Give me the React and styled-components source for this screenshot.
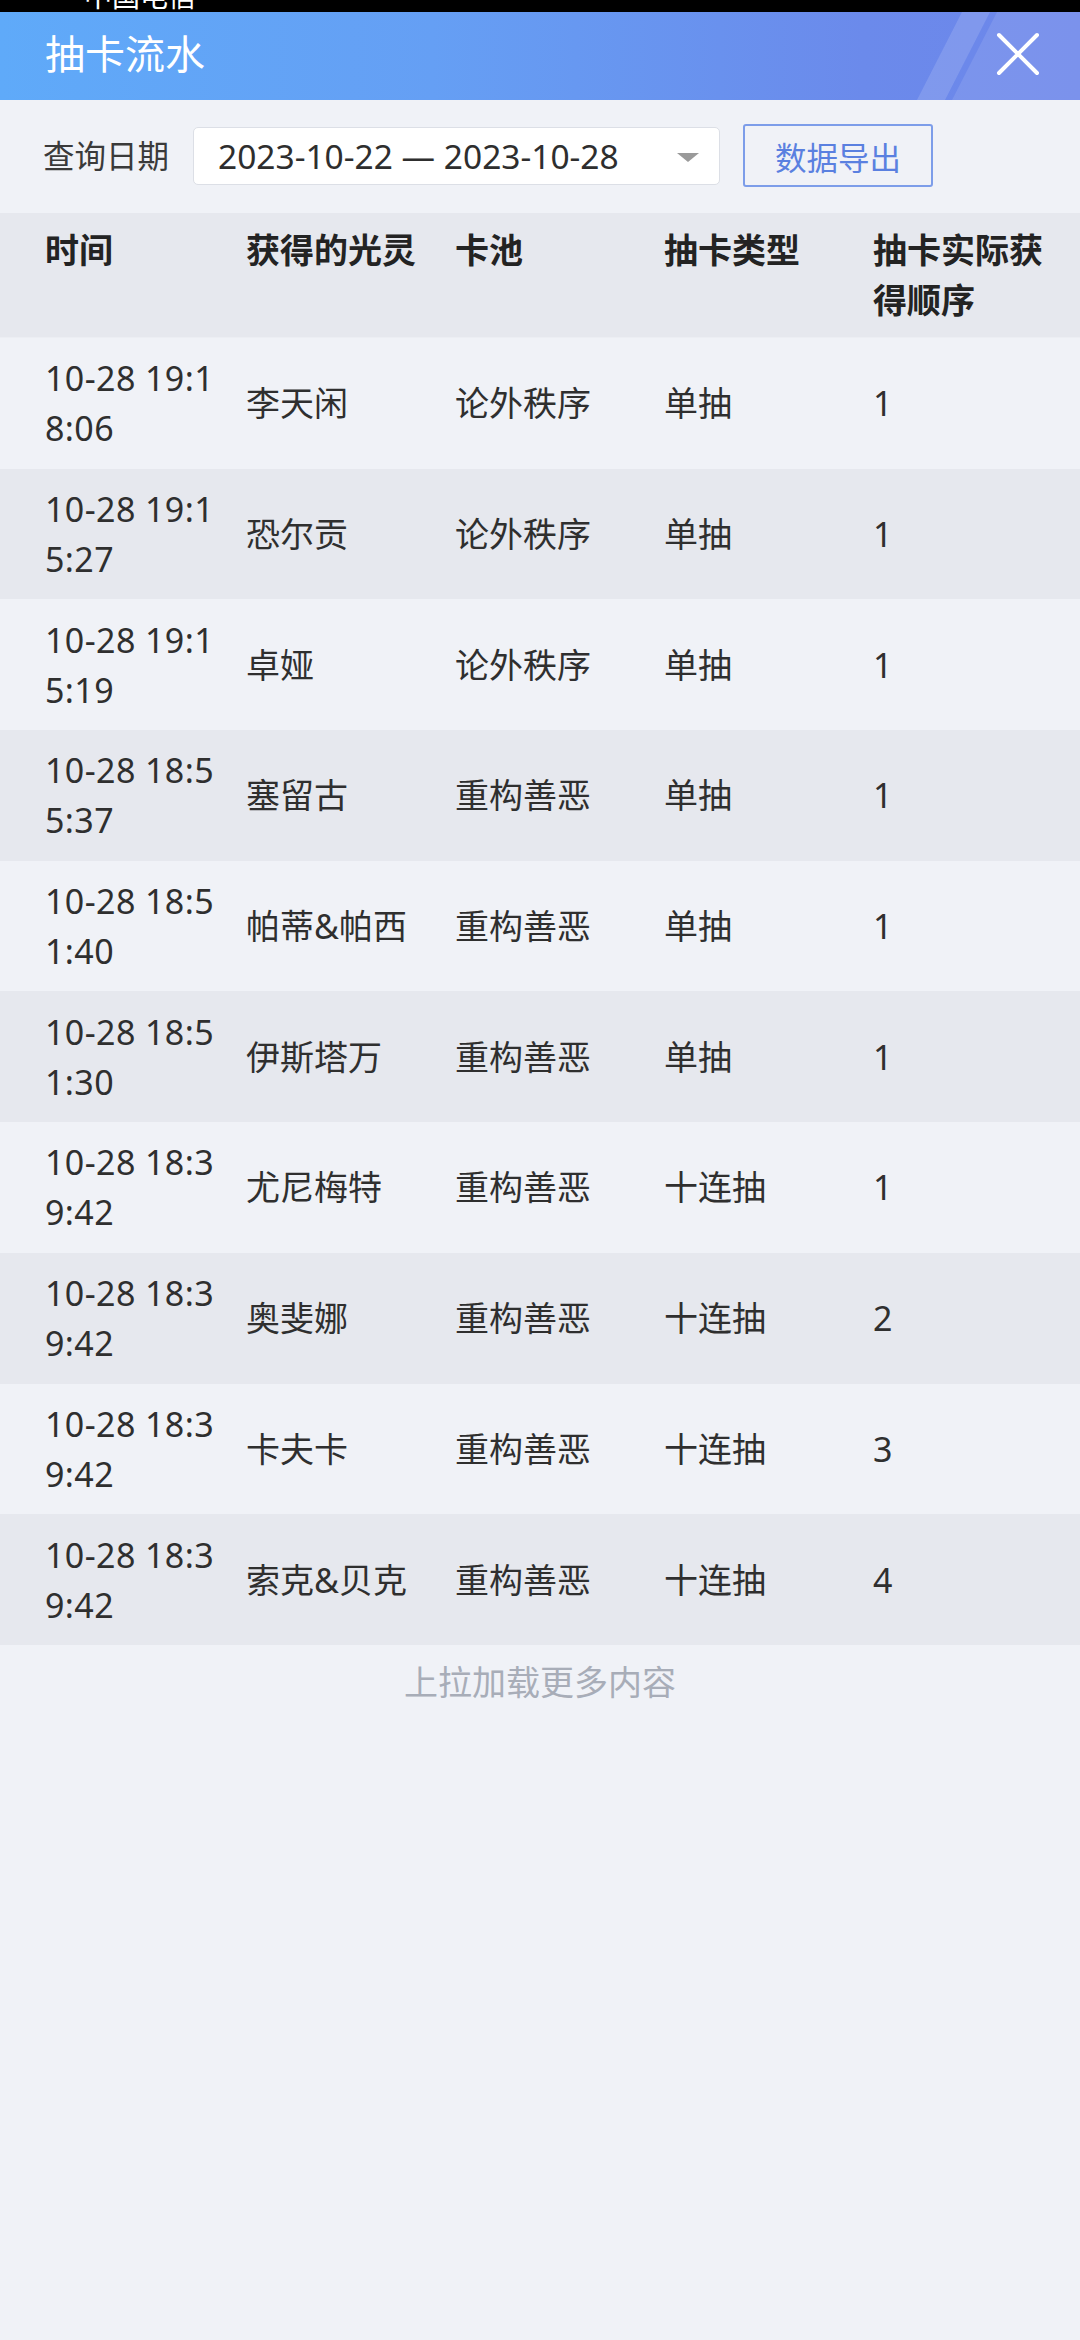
import React from "react";
import styled, { createGlobalStyle } from "styled-components";

const Global = createGlobalStyle`
  html, body {
    margin: 0;
    padding: 0;
    background: #f0f2f7;
  }
  body {
    font-family: "Noto Sans", "Noto Sans CJK SC", sans-serif;
    -webkit-font-smoothing: antialiased;
  }
  * { box-sizing: border-box; }
`;

const Page = styled.div`
  width: 1080px;
  min-height: 2340px;
  background: #f0f2f7;
  display: flex;
  flex-direction: column;
`;

const StatusBar = styled.div`
  height: 12px;
  background: #000;
  overflow: hidden;
  padding-left: 84px;
`;

const StatusText = styled.div`
  color: #fff;
  font-size: 28px;
  line-height: 28px;
  margin-top: -18px;
`;

const Header = styled.header`
  position: relative;
  height: 88px;
  background: linear-gradient(90deg, #5faaf9 0%, #659ff4 40%, #6b8aeb 80%, #6d86ea 100%);
  display: flex;
  align-items: center;
  justify-content: space-between;
  padding: 0 40px 4px 45px;
  overflow: hidden;
`;

const Deco = styled.svg`
  position: absolute;
  left: 0;
  top: 0;
  width: 1080px;
  height: 88px;
  pointer-events: none;
`;

const Title = styled.h1`
  position: relative;
  margin: 0;
  color: #fff;
  font-size: 40px;
  font-weight: 400;
  line-height: 52px;
`;

const CloseBtn = styled.button`
  position: relative;
  width: 44px;
  height: 44px;
  padding: 0;
  border: none;
  background: transparent;
  display: flex;
  align-items: center;
  justify-content: center;
`;

const FilterBar = styled.div`
  height: 113px;
  display: flex;
  align-items: center;
  padding: 0 0 2px 43px;
`;

const Label = styled.span`
  font-size: 31.5px;
  color: #3a3a3a;
  margin-right: 24px;
  line-height: 40px;
`;

const DateBox = styled.div`
  width: 527px;
  height: 58px;
  background: #fff;
  border: 1.5px solid #dcdfe6;
  border-radius: 5px;
  display: flex;
  align-items: center;
  justify-content: space-between;
  padding: 0 20px 0 24px;
  margin-right: 23px;
`;

const DateText = styled.span`
  font-size: 33.5px;
  color: #2e2e2e;
  white-space: nowrap;
`;

const Caret = styled.span`
  width: 0;
  height: 0;
  border-left: 11px solid transparent;
  border-right: 11px solid transparent;
  border-top: 9px solid #9a9a9a;
  margin-top: 4px;
`;

const ExportBtn = styled.button`
  width: 190px;
  height: 63px;
  border: 2px solid #7d9de9;
  border-radius: 3px;
  background: transparent;
  color: #5a80e0;
  font-family: inherit;
  font-size: 31.5px;
  padding: 0;
`;

const COLS = "201px 209px 209px 209px 1fr";

const HeadRow = styled.div`
  display: grid;
  grid-template-columns: ${COLS};
  align-items: start;
  background: #e6e8ee;
  padding: 12px 0 12px 45px;
  border-bottom: 1px solid #eceef3;
`;

const HeadCell = styled.div`
  font-size: 34px;
  line-height: 50px;
  font-weight: 700;
  color: #232323;
  padding-right: 24px;
  word-break: break-all;
`;

const Row = styled.div`
  display: grid;
  grid-template-columns: ${COLS};
  align-items: center;
  min-height: 130.7px;
  padding: 15px 0 15px 45px;
  background: ${(p) => (p.$alt ? "#e6e8ee" : "#f0f2f7")};
`;

const Cell = styled.div`
  font-size: 34px;
  line-height: 50px;
  color: #2f2f2f;
  padding-right: 24px;
  word-break: break-all;
  letter-spacing: ${(p) => (p.$time ? "0.4px" : "0")};
`;

const Footer = styled.div`
  text-align: center;
  font-size: 34px;
  line-height: 50px;
  color: #a8adb8;
  padding: 12px 0;
`;

const rows = [
  ["10-28 19:18:06", "李天闲", "论外秩序", "单抽", "1"],
  ["10-28 19:15:27", "恐尔贡", "论外秩序", "单抽", "1"],
  ["10-28 19:15:19", "卓娅", "论外秩序", "单抽", "1"],
  ["10-28 18:55:37", "塞留古", "重构善恶", "单抽", "1"],
  ["10-28 18:51:40", "帕蒂&帕西", "重构善恶", "单抽", "1"],
  ["10-28 18:51:30", "伊斯塔万", "重构善恶", "单抽", "1"],
  ["10-28 18:39:42", "尤尼梅特", "重构善恶", "十连抽", "1"],
  ["10-28 18:39:42", "奥斐娜", "重构善恶", "十连抽", "2"],
  ["10-28 18:39:42", "卡夫卡", "重构善恶", "十连抽", "3"],
  ["10-28 18:39:42", "索克&贝克", "重构善恶", "十连抽", "4"],
];

const heads = ["时间", "获得的光灵", "卡池", "抽卡类型", "抽卡实际获得顺序"];

export default function App() {
  return (
    <Page>
      <Global />
      <StatusBar>
        <StatusText>中国电信</StatusText>
      </StatusBar>
      <Header>
        <Deco viewBox="0 0 1080 88">
          <polygon points="962,0 990,0 945,88 917,88" fill="#ffffff" fillOpacity="0.14" />
          <polygon points="997,0 1080,0 1080,88 952,88" fill="#ffffff" fillOpacity="0.1" />
        </Deco>
        <Title>抽卡流水</Title>
        <CloseBtn aria-label="关闭">
          <svg width="44" height="44" viewBox="0 0 44 44">
            <path d="M3 3 L41 41 M41 3 L3 41" stroke="#fff" strokeWidth="4" strokeLinecap="round" />
          </svg>
        </CloseBtn>
      </Header>
      <FilterBar>
        <Label>查询日期</Label>
        <DateBox>
          <DateText>2023-10-22 — 2023-10-28</DateText>
          <Caret />
        </DateBox>
        <ExportBtn>数据导出</ExportBtn>
      </FilterBar>
      <HeadRow>
        {heads.map((h) => (
          <HeadCell key={h}>{h}</HeadCell>
        ))}
      </HeadRow>
      {rows.map((r, i) => (
        <Row key={i} $alt={i % 2 === 1}>
          {r.map((c, j) => (
            <Cell key={j} $time={j === 0}>{c}</Cell>
          ))}
        </Row>
      ))}
      <Footer>上拉加载更多内容</Footer>
    </Page>
  );
}
